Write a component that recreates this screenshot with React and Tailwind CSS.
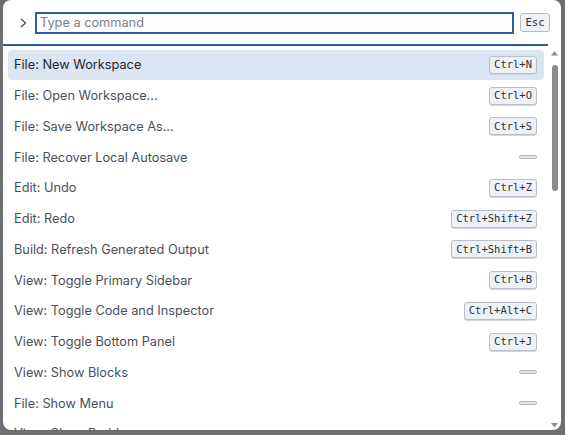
import React from "react"

const commands = [
  { label: "File: New Workspace", keys: "Ctrl+N", active: true },
  { label: "File: Open Workspace...", keys: "Ctrl+O" },
  { label: "File: Save Workspace As...", keys: "Ctrl+S" },
  { label: "File: Recover Local Autosave", keys: null },
  { label: "Edit: Undo", keys: "Ctrl+Z" },
  { label: "Edit: Redo", keys: "Ctrl+Shift+Z" },
  { label: "Build: Refresh Generated Output", keys: "Ctrl+Shift+B" },
  { label: "View: Toggle Primary Sidebar", keys: "Ctrl+B" },
  { label: "View: Toggle Code and Inspector", keys: "Ctrl+Alt+C" },
  { label: "View: Toggle Bottom Panel", keys: "Ctrl+J" },
  { label: "View: Show Blocks", keys: null },
  { label: "File: Show Menu", keys: null },
  { label: "View: Show Problems", keys: null },
]

function Kbd({ children }) {
  return (
    <kbd className="h-[18px] px-[4px] flex items-center rounded-[3px] border border-[#b9bec7] bg-[#eef1f5] text-[10.5px] text-[#2d3138] font-['DejaVu_Sans_Mono',monospace] shadow-[0_1px_0_#d3d7dd]">
      {children}
    </kbd>
  )
}

export default function App() {
  return (
    <div className="h-[435px] w-[565px] bg-[#6d6e72] pl-[3px] overflow-hidden font-['Inter',sans-serif]">
      <div className="h-[430px] w-[558px] bg-white rounded-[8px] overflow-hidden flex flex-col">
        {/* header */}
        <div className="h-[44px] shrink-0 flex items-start pt-[12px] pl-[13px] pr-[11px]">
          <svg width="14" height="14" viewBox="0 0 14 14" className="mt-[4px] mr-[5px] shrink-0">
            <polyline points="5,3 9.5,7 5,11" fill="none" stroke="#4a4f57" strokeWidth="1.3" />
          </svg>
          <div className="flex-1 h-[22px] border-2 border-[#2f5f96] flex items-center pl-[3px]">
            <span className="text-[12.75px] text-[#7b8089]">Type a command</span>
          </div>
          <button className="ml-[6px] mt-[1px] h-[19px] w-[30px] flex items-center justify-center rounded-[3px] border border-[#b5bac3] bg-[#f0f2f5] text-[10.5px] text-[#2d3138] font-['DejaVu_Sans_Mono',monospace]">
            Esc
          </button>
        </div>
        <div className="h-[2px] w-[545px] shrink-0 bg-[#2d5b93]" />

        {/* body */}
        <div className="flex flex-1 min-h-0">
          <div className="flex-1 pl-[5px] pr-[4px] pt-[3.5px]">
            {commands.map((c) => (
              <div
                key={c.label}
                className={`h-[30.75px] shrink-0 flex items-center justify-between pl-[6px] pr-[7px] rounded-[4px] ${
                  c.active ? "bg-[#dce5f2] text-[#1f2530]" : "text-[#4a505a]"
                }`}
              >
                <span className="text-[12.75px]">{c.label}</span>
                {c.keys ? (
                  <Kbd>{c.keys}</Kbd>
                ) : (
                  <span className="h-[4px] w-[18px] rounded-full border border-[#b3b8c0] bg-[#e3e6ea]" />
                )}
              </div>
            ))}
          </div>

          {/* scrollbar */}
          <div className="w-[13px] shrink-0 flex flex-col items-center pt-[5px] pb-[2px]">
            <svg width="7" height="5" viewBox="0 0 7 5">
              <polygon points="3.5,0 7,4.5 0,4.5" fill="#8c8f94" />
            </svg>
            <div className="mt-[9px] w-[6px] h-[126px] rounded-full bg-[#8b8b8b]" />
            <div className="flex-1" />
            <svg width="7" height="5" viewBox="0 0 7 5">
              <polygon points="0,0 7,0 3.5,4.5" fill="#8c8f94" />
            </svg>
          </div>
        </div>
      </div>
    </div>
  )
}
